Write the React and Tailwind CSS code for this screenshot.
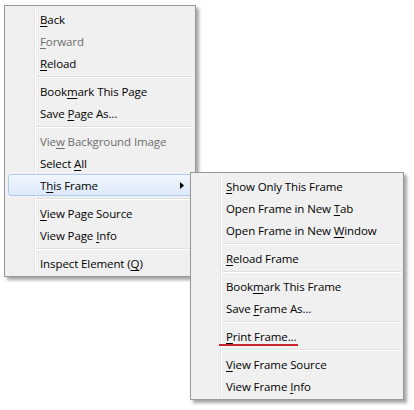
import React from "react";

const mainItems = [
  { label: "Back", u: 0 },
  { label: "Forward", u: 0, disabled: true },
  { label: "Reload", u: 0 },
  { sep: true },
  { label: "Bookmark This Page", u: 4 },
  { label: "Save Page As...", u: 5 },
  { sep: true },
  { label: "View Background Image", u: 3, disabled: true },
  { label: "Select All", u: 7 },
  { label: "This Frame", u: 1, active: true, arrow: true },
  { sep: true },
  { label: "View Page Source", u: 0 },
  { label: "View Page Info", u: 10 },
  { sep: true },
  { label: "Inspect Element (Q)", u: 17 },
];

const subItems = [
  { label: "Show Only This Frame", u: 0 },
  { label: "Open Frame in New Tab", u: 18 },
  { label: "Open Frame in New Window", u: 18 },
  { sep: true },
  { label: "Reload Frame", u: 0 },
  { sep: true },
  { label: "Bookmark This Frame", u: 4 },
  { label: "Save Frame As...", u: 5 },
  { sep: true },
  { label: "Print Frame...", u: 0, mark: true },
  { sep: true },
  { label: "View Frame Source", u: 0 },
  { label: "View Frame Info", u: 11 },
];

function Label({ label, u }) {
  return (
    <span className="whitespace-pre">
      {label.slice(0, u)}
      <span className="underline underline-offset-[2px] decoration-1">{label[u]}</span>
      {label.slice(u + 1)}
    </span>
  );
}

function Arrow() {
  return (
    <svg width="4" height="7" viewBox="0 0 4 7" className="block">
      <path d="M0 0 L4 3.5 L0 7 Z" fill="#000" />
    </svg>
  );
}

function Row({ item }) {
  if (item.sep) {
    return (
      <div className="flex h-[6px] items-stretch">
        <div className="w-[29px] shrink-0" />
        <div className="w-px bg-[#e2e3e3]" />
        <div className="w-px bg-white" />
        <div className="flex-1 flex flex-col justify-center pr-[1px]">
          <div className="h-px bg-[#e0e0e0]" />
          <div className="h-px bg-white" />
        </div>
      </div>
    );
  }
  if (item.active) {
    return (
      <div className="mx-[3px] flex h-[22px] items-center rounded-[3px] border border-[#aeccf0] bg-gradient-to-b from-[#f2f7fe] to-[#dce8f8]">
        <div className="w-[31px] shrink-0" />
        <div className="flex-1 pt-px text-black">
          <Label label={item.label} u={item.u} />
        </div>
        {item.arrow && (
          <div className="pr-[7px]">
            <Arrow />
          </div>
        )}
      </div>
    );
  }
  return (
    <div className="relative flex h-[22px] items-stretch">
      <div className="w-[29px] shrink-0" />
      <div className="w-px bg-[#e2e3e3]" />
      <div className="w-px bg-white" />
      <div
        className={`flex flex-1 items-center pl-[4px] pt-px ${
          item.disabled ? "text-[#6d6d6d]" : "text-black"
        }`}
      >
        <Label label={item.label} u={item.u} />
      </div>
      {item.mark && (
        <div className="absolute left-[28px] top-[19px] h-[2px] w-[79px] bg-[#c8262f]" />
      )}
    </div>
  );
}

export default function App() {
  return (
    <div className="relative h-[410px] w-[414px] overflow-hidden bg-white font-['Open_Sans',sans-serif] text-[11.5px] leading-[16px] tracking-[-0.1px]">
      <div className="ml-[4px] mt-[5px] w-[192px] border border-[#979797] bg-[#f0f0f0] py-[2px] shadow-[3px_3px_3px_rgba(0,0,0,0.35)]">
        {mainItems.map((it, i) => (
          <Row key={i} item={it} />
        ))}
      </div>
      <div className="absolute left-[190px] top-[172px] w-[214px] border border-[#979797] bg-[#f0f0f0] py-[2px] shadow-[3px_3px_3px_rgba(0,0,0,0.35)]">
        {subItems.map((it, i) => (
          <Row key={i} item={it} />
        ))}
      </div>
    </div>
  );
}
